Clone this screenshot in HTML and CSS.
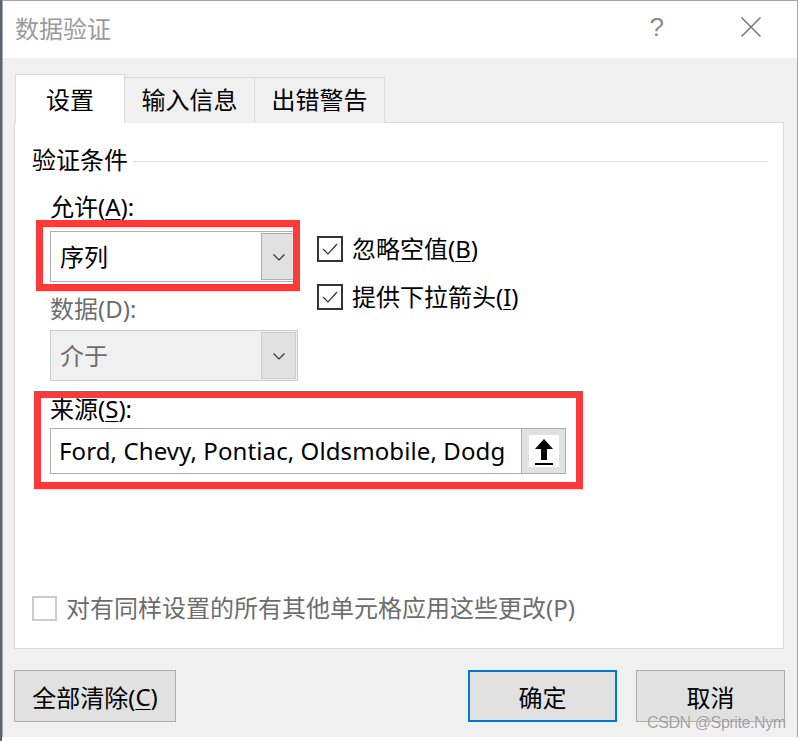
FILE: index.html
```html
<!DOCTYPE html>
<html lang="zh-CN">
<head>
<meta charset="utf-8">
<title>数据验证</title>
<link rel="stylesheet" href="styles.css">
</head>
<body>
<div class="dialog">
  <div class="titlebar">
    <span class="title">数据验证</span>
    <span class="help">?</span>
    <span class="close">
      <svg width="22" height="22" viewBox="0 0 22 22"><path d="M1.5 1.5 L20.5 20.5 M20.5 1.5 L1.5 20.5" stroke="#7a7a7a" stroke-width="1.6" fill="none"/></svg>
    </span>
  </div>
  <div class="content">
    <div class="tabs">
      <div class="tab active">设置</div>
      <div class="tab">输入信息</div>
      <div class="tab">出错警告</div>
    </div>
    <div class="panel">
      <div class="group-head"><span>验证条件</span><span class="rule"></span></div>
      <div class="form">
        <div class="row">
          <div class="col-left">
            <div class="label label-first">允许(<u>A</u>):</div>
            <div class="combo">
              <span class="combo-text">序列</span>
              <span class="drop"><svg width="14" height="10" viewBox="0 0 14 10"><path d="M1.5 2.5 L7 8 L12.5 2.5" stroke="#333" stroke-width="1.2" fill="none"/></svg></span>
            </div>
            <div class="label label-gray">数据(D):</div>
            <div class="combo disabled">
              <span class="combo-text">介于</span>
              <span class="drop"><svg width="14" height="10" viewBox="0 0 14 10"><path d="M1.5 2.5 L7 8 L12.5 2.5" stroke="#333" stroke-width="1.2" fill="none"/></svg></span>
            </div>
          </div>
          <div class="col-right">
            <div class="check">
              <span class="box"><svg width="22" height="22" viewBox="0 0 22 22"><path d="M4 11 L9 16 L18 6" stroke="#333" stroke-width="1.2" fill="none"/></svg></span>
              <span>忽略空值(<u>B</u>)</span>
            </div>
            <div class="check">
              <span class="box"><svg width="22" height="22" viewBox="0 0 22 22"><path d="M4 11 L9 16 L18 6" stroke="#333" stroke-width="1.2" fill="none"/></svg></span>
              <span>提供下拉箭头(<u>I</u>)</span>
            </div>
          </div>
        </div>
        <div class="label label-src">来源(<u>S</u>):</div>
        <div class="source">
          <span class="source-text">Ford, Chevy, Pontiac, Oldsmobile, Dodg</span>
          <span class="collapse">
            <span class="collapse-inner">
              <svg width="24" height="30" viewBox="0 0 24 30"><path d="M12 3 L3 13 L9 13 L9 24 L15 24 L15 13 L21 13 Z" fill="#000"/><rect x="3" y="27" width="18" height="2" fill="#000"/></svg>
            </span>
          </span>
        </div>
      </div>
      <div class="check check-disabled">
        <span class="box"></span>
        <span>对有同样设置的所有其他单元格应用这些更改(P)</span>
      </div>
    </div>
    <div class="buttons">
      <div class="btn btn-clear">全部清除(<u>C</u>)</div>
      <div class="spacer"></div>
      <div class="btn btn-ok">确定</div>
      <div class="btn btn-cancel">取消</div>
    </div>
  </div>
  <div class="mark mark-1"></div>
  <div class="mark mark-2"></div>
  <div class="watermark">CSDN @Sprite.Nym</div>
</div>
</body>
</html>
```
FILE: styles.css
```css
html, body {
  margin: 0;
  padding: 0;
}
body {
  width: 800px;
  height: 741px;
  overflow: hidden;
  background: linear-gradient(to right, #5d6372 0 2px, #ffffff 2px);
  font-family: "Noto Sans", "Noto Sans CJK SC", sans-serif;
  font-size: 24px;
  color: #000;
}
.dialog {
  position: relative;
  margin-left: 2px;
  width: 796px;
  height: 737px;
  box-sizing: border-box;
  border: 1px solid #a5a5a5;
  border-bottom: none;
  background: #f0f0f0;
  display: flex;
  flex-direction: column;
}
.titlebar {
  height: 57px;
  background: #fff;
  display: flex;
  align-items: center;
  padding-left: 12px;
  flex: none;
}
.title {
  color: #9a9a9a;
  font-size: 24px;
  line-height: 30px;
  margin-top: -2px;
}
.help {
  margin-left: auto;
  color: #8a8a8a;
  font-family: "Liberation Sans", sans-serif;
  font-size: 26px;
  margin-top: -4px;
  margin-right: 76px;
}
.close {
  display: flex;
  margin-right: 35px;
  margin-top: -6px;
}
.content {
  padding: 16px 12px 0 11px;
  flex: 1;
  display: flex;
  flex-direction: column;
}
.tabs {
  display: flex;
  align-items: flex-end;
  height: 49px;
  position: relative;
  z-index: 1;
  margin-bottom: -1px;
}
.tab {
  box-sizing: border-box;
  width: 130px;
  height: 46px;
  border: 1px solid #d9d9d9;
  border-bottom: none;
  border-left: none;
  background: #f0f0f0;
  text-align: center;
  line-height: 44px;
  font-size: 24px;
}
.tab.active {
  width: 110px;
  height: 49px;
  background: #fff;
  border-left: 1px solid #d9d9d9;
  margin-left: 1px;
  line-height: 50px;
}
.panel {
  box-sizing: border-box;
  width: 770px;
  height: 527px;
  background: #fff;
  border: 1px solid #d9d9d9;
  padding: 22px 15px 0 17px;
  display: flex;
  flex-direction: column;
}
.group-head {
  display: flex;
  align-items: center;
  height: 30px;
  line-height: 30px;
}
.group-head .rule {
  flex: 1;
  height: 1px;
  background: #dcdcdc;
  margin-left: 5px;
  margin-top: 2px;
}
.form {
  padding-left: 18px;
}
.row {
  display: flex;
}
.col-left {
  width: 248px;
}
.col-right {
  margin-left: 19px;
  padding-top: 59px;
}
.label {
  line-height: 30px;
  height: 30px;
}
.label-first {
  margin-top: 17px;
  margin-bottom: 9px;
}
.label-gray {
  color: #6d6d6d;
  margin-top: 12px;
  margin-bottom: 6px;
}
.label-src {
  margin-top: 13px;
  margin-bottom: 4px;
}
.combo {
  box-sizing: border-box;
  height: 51px;
  border: 1px solid #adadad;
  background: #fff;
  display: flex;
  align-items: center;
  padding: 1px;
}
.combo-text {
  flex: 1;
  padding-left: 8px;
  line-height: 30px;
}
.drop {
  box-sizing: border-box;
  width: 35px;
  height: 100%;
  background: #e1e1e1;
  border: 1px solid #adadad;
  display: flex;
  align-items: center;
  justify-content: center;
}
.combo.disabled {
  background: #f0f0f0;
  border-color: #cccccc;
}
.combo.disabled .combo-text {
  color: #6d6d6d;
}
.combo.disabled .drop {
  border-color: #cccccc;
}
.check {
  display: flex;
  align-items: center;
  height: 30px;
  line-height: 30px;
  margin-bottom: 18px;
}
.box {
  box-sizing: border-box;
  width: 26px;
  height: 26px;
  border: 2px solid #333;
  margin-right: 9px;
  display: flex;
  align-items: center;
  justify-content: center;
}
.source {
  box-sizing: border-box;
  width: 516px;
  height: 46px;
  border: 1px solid #adadad;
  display: flex;
  align-items: center;
  padding: 0;
}
.source-text {
  flex: 1;
  padding-left: 8px;
  white-space: nowrap;
  line-height: 30px;
  letter-spacing: 0.1px;
}
.collapse {
  box-sizing: border-box;
  width: 45px;
  height: 46px;
  margin: -1px -1px -1px 0;
  background: #e1e1e1;
  border: 1px solid #adadad;
  display: flex;
  align-items: center;
  justify-content: center;
}
.collapse-inner {
  width: 30px;
  height: 32px;
  background: #fff;
  display: flex;
  align-items: center;
  justify-content: center;
}
.check-disabled {
  margin-top: 119px;
  color: #6d6d6d;
  margin-bottom: 0;
}
.check-disabled .box {
  border-color: #cccccc;
  width: 25px;
  height: 25px;
}
.buttons {
  display: flex;
  margin-top: 21px;
  height: 52px;
  width: 771px;
}
.btn {
  box-sizing: border-box;
  height: 52px;
  background: #e1e1e1;
  border: 1px solid #adadad;
  display: flex;
  align-items: center;
  justify-content: center;
  font-size: 24px;
}
.btn-clear {
  width: 162px;
}
.spacer {
  flex: 1;
}
.btn-ok {
  width: 149px;
  border: 2px solid #0078d7;
}
.btn-cancel {
  width: 149px;
  margin-left: 19px;
}
u {
  text-decoration-thickness: 1px;
  text-underline-offset: 3px;
}
.mark {
  position: absolute;
  border: 7px solid #fc3a3a;
  box-sizing: border-box;
  pointer-events: none;
}
.mark-1 {
  left: 33px;
  top: 219px;
  width: 264px;
  height: 71px;
}
.mark-2 {
  left: 31px;
  top: 390px;
  width: 549px;
  height: 98px;
}
.watermark {
  position: absolute;
  left: 644px;
  top: 713px;
  white-space: nowrap;
  font-family: "Liberation Sans", sans-serif;
  font-size: 16px;
  line-height: 18px;
  letter-spacing: -0.4px;
  color: rgba(125, 125, 125, 0.75);
  text-shadow: 0 0 1px #fff;
}
```
